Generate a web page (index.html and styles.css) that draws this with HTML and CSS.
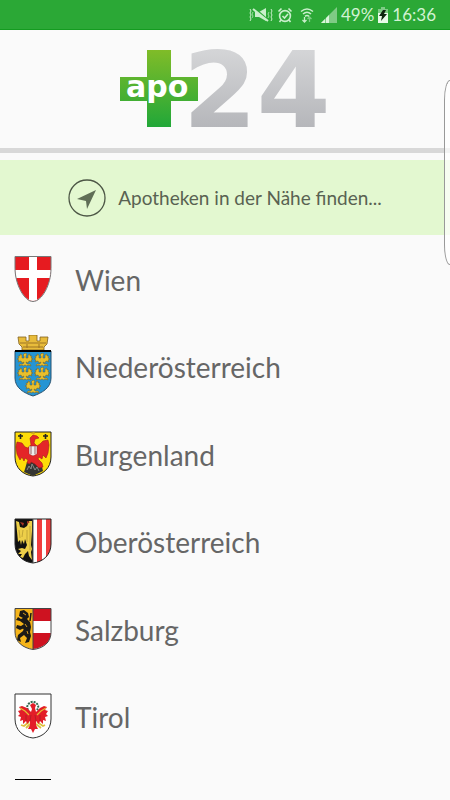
FILE: index.html
```html
<!DOCTYPE html>
<html lang="de">
<head>
    <meta charset="UTF-8">
    <meta name="viewport" content="width=device-width, initial-scale=1.0">
    <title>apo24</title>
    <link rel="stylesheet" href="styles.css">
</head>
<body>
    <div class="status-bar">
        <svg width="24" height="16" viewBox="0 0 24 16" fill="none" stroke="#c9efcb">
            <path d="M6 5h4l7-4v13l-7-4H6z" fill="#c9efcb" stroke="none"/>
            <path d="M5 1l15 13" stroke="#2ba836" stroke-width="2"/>
            <path d="M4 2l15 12" stroke-width="2"/>
            <path d="M1 2l1 2-1 2 1 2-1 2 1 2-1 2M22 2l1 2-1 2 1 2-1 2 1 2-1 2"/>
            <path d="M4 5l-1 2 1 2-1 2M20 5l-1 2 1 2-1 2" opacity=".7"/>
        </svg>
        <svg width="16" height="16" viewBox="0 0 16 16" fill="none" stroke="#c9efcb" stroke-width="1.6">
            <circle cx="8" cy="9" r="5.4"/>
            <path d="M1.500 4.500l3-3M14.500 4.500l-3-3M5.500 9l2 2 3.500-4M4 13l-1.500 2M12 13l1.500 2"/>
        </svg>
        <svg class="wifi" width="16" height="16" viewBox="0 0 16 16" fill="none" stroke="#c9efcb" stroke-width="1.6">
            <path d="M2 4.500q6-5 12 0M4 7q4-3.500 8 0M6 9.400q2-1.800 4 0"/>
            <path d="M5.500 10v5M3.500 13l2 2 2-2" stroke-width="1.300"/>
            <path d="M10.500 15v-5M8.500 12l2-2 2 2" stroke-width="1.300" opacity=".5"/>
        </svg>
        <svg width="16" height="16" viewBox="0 0 16 16">
            <path d="M0 16L16 0v16z" fill="#7fcb85"/>
            <path d="M0 16l4-4v4zM5 11l3-3v8H5z" fill="#d9f5da"/>
        </svg>
        <span class="percent">49%</span>
        <svg width="10" height="16" viewBox="0 0 10 16">
            <path d="M3 0h4v2h3v4H0V2h3z" fill="#7fcb85"/>
            <path d="M0 6h10v10H0z" fill="#e8fae8"/>
            <path d="M5 3L1 9h3l-1 5 6-7H6l2-4z" fill="#0c240d"/>
        </svg>
        <span class="clock">16:36</span>
    </div>

    <header class="header">
        <svg class="logo" width="212" height="80" viewBox="0 0 212 80" role="img" aria-label="apo24">
            <defs>
                <linearGradient id="green" x1="0" y1="0" x2="0" y2="78" gradientUnits="userSpaceOnUse">
                    <stop offset="0" stop-color="#80bc28"/>
                    <stop offset="1" stop-color="#20a739"/>
                </linearGradient>
                <linearGradient id="grey" x1="0" y1="0" x2="0" y2="78" gradientUnits="userSpaceOnUse">
                    <stop offset="0" stop-color="#d4d5d7"/>
                    <stop offset="1" stop-color="#b5b6ba"/>
                </linearGradient>
            </defs>
            <text class="logo-number" x="64" y="77" fill="url(#grey)">24</text>
            <path d="M28 0h24v27h27v24H52v26H28V51H1V27h27z" fill="url(#green)" stroke="#fafafa" stroke-width="3" paint-order="stroke"/>
            <text class="logo-name" x="7" y="47">apo</text>
        </svg>
    </header>

    <button class="nearby" type="button">
        <svg width="38" height="38" viewBox="0 0 38 38">
            <circle cx="19" cy="19" r="18" fill="none" stroke="#4d5746" stroke-width="1.300"/>
            <path d="M28 11L9 20l9 2 1 8z" fill="#5f6e56"/>
        </svg>
        <span>Apotheken in der Nähe finden...</span>
    </button>

    <svg class="symbols" width="0" height="0" aria-hidden="true">
        <symbol id="eagle" viewBox="0 0 16 14">
            <path d="M8 0l2 1-1 2 0 2 2 0 0-3 2-1 0 2 2 0-1 2 2 1-2 1 1 2-3-1-1 2-2-1 1 2 3 0 1 2-3-1-1 1-2-1-2 1-1-1-3 1 1-2 3 0 1-2-2 1-1-2-3 1 1-2-2-1 2-1-1-2 2 0 0-2 2 1 0 3 2 0 0-2-1-1z" fill="#e8bf2c" stroke="#705d24" stroke-width=".5"/>
        </symbol>
    </svg>

    <main>
        <ul class="states">
            <li>
                <a href="#wien">
                    <svg class="crest" width="38" height="46" viewBox="0 0 38 46">
                        <clipPath id="wien-shape"><path d="M1 0h36v12c0 16-9 33-18 33S1 28 1 12z"/></clipPath>
                        <g clip-path="url(#wien-shape)">
                            <path d="M0 0h38v46H0z" fill="#e61b20"/>
                            <path d="M15 0h8v46h-8zM0 14h38v8H0z" fill="#fff"/>
                        </g>
                        <path d="M1 .5h36v12c0 16-9 33-18 33S1 28 1 12z" fill="none" stroke="#777"/>
                    </svg>
                    <span>Wien</span>
                </a>
            </li>
            <li>
                <a href="#niederoesterreich">
                    <svg class="crest" width="38" height="62" viewBox="0 0 38 62">
                        <path d="M4 2h8v4h3V0h8v6h3V2h8l-1 7-3 3v3H8v-3L5 9z" fill="#e8bc3b" stroke="#806020" stroke-width=".8"/>
                        <path d="M6 8h26M9 12h20M13 9v4M25 9v4" stroke="#9d7424"/>
                        <path d="M1 16h36v27c0 10-9 15-18 18C10 58 1 53 1 43z" fill="#2595d4" stroke="#28516e"/>
                        <path d="M1 16h36" stroke="#000" stroke-width="2"/>
                        <use href="#eagle" x="3" y="18" width="16" height="14"/>
                        <use href="#eagle" x="20" y="18" width="16" height="14"/>
                        <use href="#eagle" x="3" y="32" width="16" height="14"/>
                        <use href="#eagle" x="20" y="32" width="16" height="14"/>
                        <use href="#eagle" x="11" y="45" width="16" height="14"/>
                    </svg>
                    <span>Niederösterreich</span>
                </a>
            </li>
            <li>
                <a href="#burgenland">
                    <svg class="crest" width="38" height="46" viewBox="0 0 38 46">
                        <path d="M1 1h36v25c0 11-8 18-18 19C9 44 1 37 1 26z" fill="#fedc08" stroke="#222"/>
                        <path d="M4 5h5M6.500 3v5M29 5h5M31.500 3v5" stroke="#222" stroke-width="1.600"/>
                        <path d="M11 38l2-7 3 1 2-3 3 1 3-1 1 4 3 3 1 4-10 5-9-4z" fill="#343532"/>
                        <path d="M13 39l2-4 2 3 1-5 3 6 2-3 2 4" fill="none" stroke="#888"/>
                        <path d="M16 7l3-3 4 1 2 2-4 1-1 4 3 3 3-2 3-3 5-1 1 5-1 8-2 5-3-3-1 4-3-2-1 2 4 4 1 4-4 1-4-4-4-2-1 2-3-1 1-3-3-2-1 3-2-4-2 3-3-6-1-7 1-5 5 1 3 4 3 1 3-3z" fill="#e42528" stroke="#a51b1f" stroke-width=".6"/>
                        <path d="M15 15h8v8l-4 2-4-2z" fill="#eee" stroke="#922" stroke-width=".5"/>
                        <path d="M17 15v8M21 15v8" stroke="#9a6264"/>
                        <path d="M17 3l1-2 1 1 1-2 1 3z" fill="#d7ac20"/>
                    </svg>
                    <span>Burgenland</span>
                </a>
            </li>
            <li>
                <a href="#oberoesterreich">
                    <svg class="crest" width="38" height="46" viewBox="0 0 38 46">
                        <clipPath id="ooe-shape"><path d="M1 1h36v25c0 11-8 18-18 19C9 44 1 37 1 26z"/></clipPath>
                        <g clip-path="url(#ooe-shape)">
                            <path d="M0 0h19v46H0z" fill="#101010"/>
                            <path d="M19 0h19v46H19z" fill="#fff"/>
                            <path d="M23 0h5v46h-5zM32 0h5v46h-5z" fill="#f03d3d"/>
                            <path d="M2 3l3 1 1 5 4 1 3-2 2-5 3 0v10l-1 14 1 4-1 3 1 8-3-4-1-5-3 3-2 4-3-1 2-3-4 0 3-3-3-2 4-1 3 1 2-4-2-6-1 5-2-4-1 5-1-5-2 2z" fill="#edcf49"/>
                            <path d="M5 12l1 8M9 12l-1 7M13 12v12M16 8v24" stroke="#a58c2c" stroke-width=".6"/>
                            <path d="M6 4l4 1-1 3zM13 3l3 1-3 2z" fill="#a93524"/>
                        </g>
                        <path d="M1 1h36v25c0 11-8 18-18 19C9 44 1 37 1 26z" fill="none" stroke="#222"/>
                        <path d="M19 1v44" stroke="#555"/>
                    </svg>
                    <span>Oberösterreich</span>
                </a>
            </li>
            <li>
                <a href="#salzburg">
                    <svg class="crest" width="38" height="42" viewBox="0 0 38 42">
                        <clipPath id="sbg-shape"><path d="M1 0h36v24c0 10-8 16-18 17C9 40 1 34 1 24z"/></clipPath>
                        <g clip-path="url(#sbg-shape)">
                            <path d="M0 0h19v42H0z" fill="#f6b51a"/>
                            <path d="M19 0h19v42H19z" fill="#ce1220"/>
                            <path d="M19 13h19v12H19z" fill="#fff"/>
                            <path d="M6 3l4-1 4 3 1 4-2 2 3 3 1 5-1 5 1 4-2 6-4 1 2-5-3-3-4 3 1 4-4-2 1-5 5-4 1-3-4 2-4-2 1-3 4 1 3-2-4-3-4-1 2-3 3 2 2-1-4-2z" fill="#1c1a16"/>
                            <path d="M16 13l1-8M9 10l4 4M7 19l5 2M12 26l3 4" stroke="#1c1a16" stroke-width="1.500"/>
                            <path d="M9 5l3 2M11 16l2 3M13 23l1 3" stroke="#d49b20"/>
                        </g>
                        <path d="M1 .5h36v24c0 10-8 16-18 17C9 40 1 34 1 24z" fill="none" stroke="#444"/>
                        <path d="M19 0v41" stroke="#444"/>
                    </svg>
                    <span>Salzburg</span>
                </a>
            </li>
            <li>
                <a href="#tirol">
                    <svg class="crest" width="38" height="46" viewBox="0 0 38 46">
                        <path d="M1 1h36v25c0 11-8 18-18 19C9 44 1 37 1 26z" fill="#fff" stroke="#333"/>
                        <path d="M14 17c-3-5 3-9 6-8s6 4 3 8" fill="none" stroke="#35694e" stroke-width="2" stroke-dasharray="2 1"/>
                        <path d="M15 29l-5 4-3-1M16 31l-4 4M23 29l6 4 2-1M22 31l5 4" fill="none" stroke="#dec13d" stroke-width="1.800"/>
                        <path d="M16 12l3-2 3 2-1 3 1 4 4-4 4-2 3 1-2 3 3 1-2 3 2 2-3 1 1 4-3-1 0 4-3-3-1 3-3-3 0 4 2 4-3 0-2 4-2-4-3 0 2-4 0-4-3 3-1-3-3 3 0-4-3 1 1-4-3-1 2-2-2-3 3-1-2-3 3-1 5 2 4 4 1-3z" fill="#e31d28"/>
                        <path d="M6 15l5 3 4 4M32 15l-5 3-4 4" fill="none" stroke="#e4bd34" stroke-width="1.200"/>
                        <path d="M17 22l-1 6M21 22l1 6M12 22v6M26 22v6" stroke="#991d23" stroke-width=".6"/>
                    </svg>
                    <span>Tirol</span>
                </a>
            </li>
            <li class="next-state" aria-hidden="true">
                <svg class="crest" width="38" height="2" viewBox="0 0 38 2"><path d="M1 0h36v1H1z"/></svg>
            </li>
        </ul>
    </main>
    <div class="edge-panel"></div>
</body>
</html>
```

FILE: styles.css
```css
* {
    box-sizing: border-box;
}
body {
    margin: 0;
    position: relative;
    min-height: 100vh;
    overflow-x: hidden;
    font-family: Lato, sans-serif;
    color: #666;
    background: #fafafa;
}
.status-bar {
    height: 30px;
    padding: 0 14px;
    display: flex;
    align-items: center;
    justify-content: flex-end;
    gap: 4px;
    font-size: 17px;
    line-height: 20px;
    color: #d2f2d3;
    background: #2ba836;
    border-bottom: 1px solid #149b20;
}
.status-bar .wifi {
    margin: 0 2px;
}
.header {
    height: 123px;
    padding-top: 20px;
    text-align: center;
    border-bottom: 5px solid #d8d8d8;
}
.logo {
    display: block;
    margin: 0 auto;
    overflow: visible;
}
.logo-number,
.logo-name {
    font-family: "DejaVu Sans", sans-serif;
    font-weight: bold;
}
.logo-number {
    font-size: 106px;
}
.logo-name {
    font-size: 30px;
    fill: #fff;
}
.nearby {
    width: 100%;
    height: 75px;
    margin-top: 7px;
    padding: 0;
    display: flex;
    align-items: center;
    justify-content: center;
    gap: 12px;
    border: none;
    font-family: inherit;
    font-size: 19px;
    color: #596252;
    background: #e3f8d0;
    cursor: pointer;
}
.symbols {
    position: absolute;
}
.states {
    margin: 0;
    padding: 0;
    list-style: none;
}
.states a {
    height: 87px;
    padding: 0 14px;
    display: flex;
    align-items: center;
    gap: 23px;
    font-size: 28px;
    color: inherit;
    text-decoration: none;
}
.states li:nth-child(even) a {
    height: 88px;
}
.states span {
    padding-top: 2px;
}
.crest {
    display: block;
    flex: none;
}
.states .next-state {
    padding: 19px 14px 0;
}
.edge-panel {
    position: absolute;
    top: 80px;
    right: 0;
    width: 6px;
    height: 185px;
    border: 1px solid #999;
    border-right: none;
    border-radius: 6px 0 0 6px / 20px 0 0 20px;
    background: rgba(255, 255, 255, 0.7);
}
```
